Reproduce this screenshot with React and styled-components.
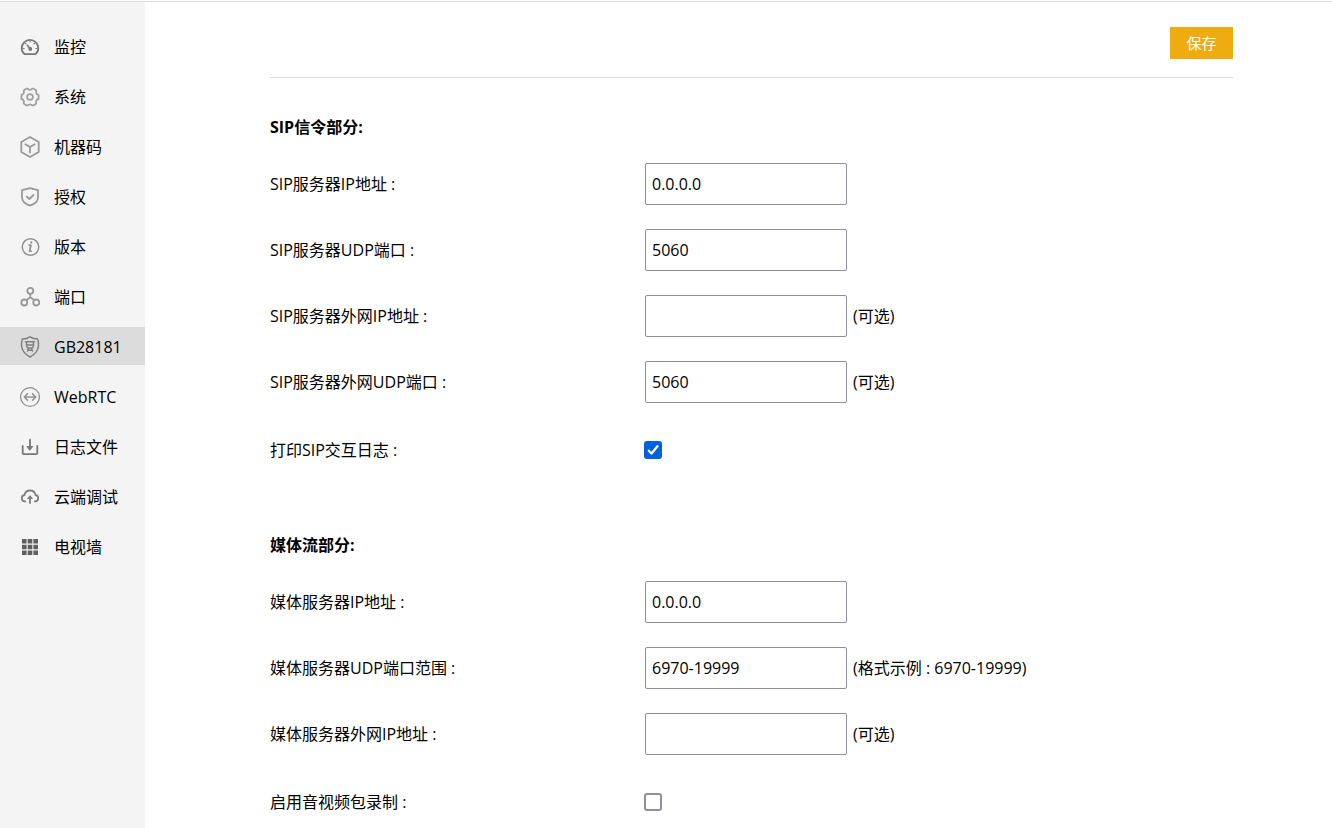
import React, { useState } from "react";
import styled, { createGlobalStyle } from "styled-components";

const GlobalStyle = createGlobalStyle`
  *, *::before, *::after { box-sizing: border-box; }
  html { scrollbar-width: none; }
  body {
    margin: 0;
    background: #fff;
    color: #000;
    font: 16px/24px "Open Sans", "Noto Sans CJK SC", sans-serif;
  }
`;

const Page = styled.div`
  display: flex;
  min-height: 100vh;
  padding-top: 2px;
  background: linear-gradient(#fff 1px, #dcdcdc 1px, #dcdcdc 2px, transparent 2px);
`;

const Sidebar = styled.nav`
  flex: 0 0 145px;
  display: flex;
  flex-direction: column;
  gap: 12px;
  padding-top: 25px;
  background: #f4f4f4;
`;

const NavLink = styled.a`
  display: flex;
  align-items: center;
  gap: 14px;
  height: 38px;
  padding: 2px 0 0 20px;
  color: #000;
  text-decoration: none;
  background: ${(p) => (p.$active ? "#dcdcdc" : "transparent")};
`;

const NavIcon = styled.svg`
  flex: none;
  width: 20px;
  height: 22px;
  fill: none;
  stroke: ${(p) => p.$tone};
  color: ${(p) => p.$tone};
  stroke-width: 1.8;
  stroke-linecap: round;
  stroke-linejoin: round;
`;

const Main = styled.main`
  flex: 1;
  min-width: 0;
  padding: 25px 99px 0 125px;
`;

const Toolbar = styled.header`
  display: flex;
  justify-content: flex-end;
  padding-bottom: 18px;
  border-bottom: 1px solid #dcdcdc;
`;

const SaveButton = styled.button`
  width: 63px;
  height: 32px;
  padding: 0;
  border: 0;
  background: #eeac11;
  color: #fff;
  font: inherit;
  font-size: 15px;
  cursor: pointer;
`;

const Section = styled.section`
  padding-top: ${(p) => (p.$first ? 26 : 37)}px;
`;

const Heading = styled.h2`
  margin: 0;
  padding-bottom: 1px;
  font-size: 16px;
  font-weight: 700;
  line-height: 46px;
`;

const Row = styled.div`
  display: grid;
  grid-template-columns: 375px 1fr;
  align-items: center;
  min-height: ${(p) => (p.$tall ? 70 : 66)}px;
`;

const Label = styled.label`
  white-space: nowrap;
`;

const Field = styled.div`
  display: flex;
  align-items: center;
  gap: 6px;
`;

const TextInput = styled.input`
  width: 202px;
  height: 42px;
  padding: 1px 6px;
  border: 1px solid #8f8f9d;
  border-radius: 2px;
  background: #fff;
  color: #000;
  font: inherit;
`;

const Hint = styled.span`
  white-space: nowrap;
`;

const CheckWrap = styled.span`
  display: grid;
  margin-left: -1px;
  > * { grid-area: 1 / 1; }
`;

const CheckInput = styled.input`
  appearance: none;
  width: 18px;
  height: 18px;
  margin: 0;
  border: 2px solid #8f8f9d;
  border-radius: 3px;
  background: #fff;
  &:checked { border-color: #0061e0; background: #0061e0; }
  &:checked + svg { visibility: visible; }
`;

const CheckMark = styled.svg`
  width: 18px;
  height: 18px;
  visibility: hidden;
  pointer-events: none;
  fill: none;
  stroke: #fff;
  stroke-width: 2.3;
  stroke-linecap: round;
  stroke-linejoin: round;
`;

const icons = {
  gauge: (
    <>
      <path d="M4.6 18.2h10.8c1.6-1.3 2.9-3.6 2.9-6a8.3 8.3 0 0 0-16.6 0c0 2.4 1.300 4.700 2.900 6z" />
      <path d="M7.500 9.500 10.200 12.800" strokeWidth="1.700" />
      <circle cx="10.300" cy="13" r="1" fill="currentColor" />
      <path d="M10 5v1M5.500 7.500l.6.5M14.500 7.500l-.6.5M3.200 12.500h1M15.800 12.500h1" strokeWidth="1.100" />
    </>
  ),
  gear: (
    <>
      <path d="M6.700 2.600h1.100c.7 1.500 3.700 1.500 4.400 0h1.100l2.400 1.500.7 1c-1 1.400.3 3.700 2.200 3.900v4c-1.900.2-3.200 2.500-2.200 3.900l-.7 1-2.400 1.500h-1.100c-.7-1.500-3.700-1.500-4.400 0H6.700l-2.400-1.500-.7-1C4.600 15.500 3.300 13.200 1.400 13V9c1.900-.2 3.200-2.500 2.200-3.900l.7-1z" />
      <circle cx="10" cy="11" r="2.900" />
    </>
  ),
  cube: (
    <>
      <path d="M10 1 18.700 6v10L10 21 1.300 16V6z" />
      <path d="M5.300 8.300 10 11l4.700-2.700M10 11v5.500" />
    </>
  ),
  shield: (
    <>
      <path d="M10 2.200 18 4.200v7c0 4.300-3.700 6.900-8 8.400-4.300-1.500-8-4.100-8-8.400v-7z" />
      <path d="m6.800 10.700 2.500 2.300 4.200-4" />
    </>
  ),
  info: (
    <>
      <circle cx="10.500" cy="11" r="8.300" strokeWidth="1.500" />
      <path d="M9.300 9.200h1.500l-1.200 6h1.500" />
      <path d="M11.300 6.300v.3" strokeWidth="2.100" />
    </>
  ),
  nodes: (
    <>
      <circle cx="10.300" cy="4.800" r="3" />
      <circle cx="4.300" cy="16.500" r="3" />
      <circle cx="16.300" cy="16.500" r="3" />
      <path d="M10.300 7.800v3.500L6.300 14.300M10.300 11.300l4 3" />
    </>
  ),
  badge: (
    <>
      <path d="M10 .8c2.300 1.500 4.800 2.100 7.600 2.100.7 2 1 4.300.9 6.600-.4 5.200-3.700 9-8.500 11.600C5.200 18.500 1.900 14.700 1.500 9.500c-.1-2.300.2-4.600.9-6.600C5.200 2.900 7.700 2.300 10 .8z" strokeWidth="1.500" />
      <path d="M5.500 5.800h9M6.500 6v3.500L7.500 12h5l1-2.500V6M7.500 9h5M7.500 15l1-2.500M12.500 15l-1-2.500M8 14.300h4" strokeWidth="1.400" />
    </>
  ),
  exchange: (
    <>
      <circle cx="10" cy="11" r="9.400" strokeWidth="1.300" />
      <path d="M4.500 11h11M7.500 7.700 4.300 11l3.200 3.300M12.500 7.700l3.200 3.300-3.200 3.300" strokeWidth="1.600" />
    </>
  ),
  download: (
    <>
      <path d="M2.700 10v7.300c0 .6.300.9.900.9h12.800c.6 0 .9-.3.900-.9V10M10 3.700v9" />
      <path d="M7.300 10.500h5.400L10 14z" fill="currentColor" strokeWidth="1" />
    </>
  ),
  cloud: (
    <>
      <path d="M5.200 15.500C3.200 15.300 1.800 14 1.800 12.200c0-1.700 1.100-2.900 2.700-3.200C5 6.200 7.300 4.500 10 4.500s5 1.700 5.500 4.500c1.600.3 2.700 1.500 2.700 3.200 0 1.800-1.400 3.100-3.400 3.300M10 17v-6" />
      <path d="M7.800 12.200 10 9.700l2.200 2.500z" fill="currentColor" strokeWidth="1" />
    </>
  ),
  grid: (
    <path
      d="M2 3h4.600v4.600H2zM7.700 3h4.600v4.600H7.700zM13.400 3H18v4.600h-4.600zM2 8.700h4.600v4.600H2zM7.700 8.700h4.600v4.600H7.700zM13.400 8.700H18v4.600h-4.600zM2 14.400h4.600V19H2zM7.700 14.400h4.600V19H7.700zM13.400 14.400H18V19h-4.600z"
      fill="currentColor"
      stroke="none"
    />
  ),
};

const navItems = [
  { icon: "gauge", text: "监控", tone: "#777" },
  { icon: "gear", text: "系统", tone: "#a0a0a0" },
  { icon: "cube", text: "机器码", tone: "#999" },
  { icon: "shield", text: "授权", tone: "#999" },
  { icon: "info", text: "版本", tone: "#929292" },
  { icon: "nodes", text: "端口", tone: "#999" },
  { icon: "badge", text: "GB28181", tone: "#808080", active: true },
  { icon: "exchange", text: "WebRTC", tone: "#929292" },
  { icon: "download", text: "日志文件", tone: "#777" },
  { icon: "cloud", text: "云端调试", tone: "#808080" },
  { icon: "grid", text: "电视墙", tone: "#606060" },
];

const sections = [
  {
    title: "SIP信令部分:",
    rows: [
      { id: "sip-ip", label: "SIP服务器IP地址 :", value: "0.0.0.0" },
      { id: "sip-udp", label: "SIP服务器UDP端口 :", value: "5060" },
      { id: "sip-wan-ip", label: "SIP服务器外网IP地址 :", value: "", hint: "(可选)" },
      { id: "sip-wan-udp", label: "SIP服务器外网UDP端口 :", value: "5060", hint: "(可选)" },
      { id: "sip-log", label: "打印SIP交互日志 :", value: true },
    ],
  },
  {
    title: "媒体流部分:",
    rows: [
      { id: "media-ip", label: "媒体服务器IP地址 :", value: "0.0.0.0" },
      { id: "media-udp", label: "媒体服务器UDP端口范围 :", value: "6970-19999", hint: "(格式示例 : 6970-19999)" },
      { id: "media-wan-ip", label: "媒体服务器外网IP地址 :", value: "", hint: "(可选)" },
      { id: "media-record", label: "启用音视频包录制 :", value: false },
    ],
  },
];

function SettingRow({ id, label, value: initial, hint }) {
  const [value, setValue] = useState(initial);
  const isCheck = typeof initial === "boolean";
  return (
    <Row $tall={isCheck}>
      <Label htmlFor={id}>{label}</Label>
      <Field>
        {isCheck ? (
          <CheckWrap>
            <CheckInput id={id} type="checkbox" checked={value} onChange={(e) => setValue(e.target.checked)} />
            <CheckMark viewBox="0 0 18 18" aria-hidden="true">
              <path d="M4.800 9.800 7.500 12.500 13.500 5.300" />
            </CheckMark>
          </CheckWrap>
        ) : (
          <TextInput id={id} type="text" value={value} onChange={(e) => setValue(e.target.value)} />
        )}
        {hint && <Hint>{hint}</Hint>}
      </Field>
    </Row>
  );
}

export default function App() {
  return (
    <>
      <GlobalStyle />
      <Page>
        <Sidebar>
          {navItems.map((item) => (
            <NavLink key={item.text} href="#" $active={item.active} aria-current={item.active ? "page" : undefined}>
              <NavIcon viewBox="0 0 20 22" $tone={item.tone} aria-hidden="true">
                {icons[item.icon]}
              </NavIcon>
              {item.text}
            </NavLink>
          ))}
        </Sidebar>
        <Main>
          <Toolbar>
            <SaveButton type="button">保存</SaveButton>
          </Toolbar>
          {sections.map((section, i) => (
            <Section key={section.title} $first={i === 0}>
              <Heading>{section.title}</Heading>
              {section.rows.map((row) => (
                <SettingRow key={row.id} {...row} />
              ))}
            </Section>
          ))}
        </Main>
      </Page>
    </>
  );
}
